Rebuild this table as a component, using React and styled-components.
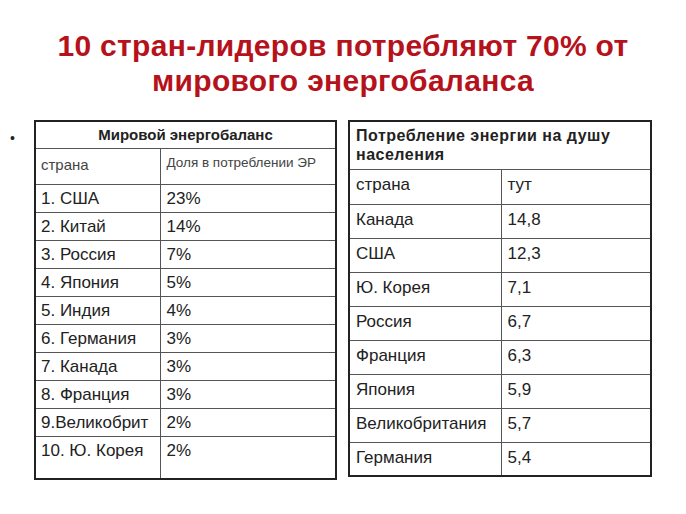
import React from "react";
import styled, { createGlobalStyle } from "styled-components";

const GlobalStyle = createGlobalStyle`
  html, body {
    margin: 0;
    padding: 0;
    background: #ffffff;
  }
  body {
    font-family: "Liberation Sans", Arial, sans-serif;
    color: #222;
  }
`;

const Page = styled.div`
  width: 686px;
  height: 514px;
  overflow: hidden;
  background: #fff;
`;

const Title = styled.h1`
  margin: 0;
  padding-top: 28px;
  text-align: center;
  font-size: 30px;
  line-height: 35px;
  letter-spacing: 0.3px;
  font-weight: bold;
  color: #b5121b;
`;

const Content = styled.div`
  display: flex;
  align-items: flex-start;
  margin-top: 22px;
  padding-left: 10px;
`;

const Bullet = styled.span`
  width: 24px;
  flex: none;
  font-size: 14px;
  line-height: 14px;
  padding-top: 11px;
  color: #222;
`;

const Table = styled.table`
  border-collapse: collapse;
  width: ${(p) => p.$width}px;
  border: 2px solid #222;
  margin-right: ${(p) => p.$gap || 0}px;
  table-layout: fixed;
`;

const Cell = styled.td`
  border: 1px solid #555;
  padding: ${(p) => p.$pad || "4px 5px 0"};
  vertical-align: top;
  text-align: left;
  font-size: ${(p) => p.$size || 17}px;
  line-height: 20px;
  color: ${(p) => p.$color || "#222"};
  height: ${(p) => p.$h}px;
  box-sizing: border-box;
  white-space: nowrap;
  overflow: hidden;
`;

const HeadCell = styled.td`
  border: 1px solid #555;
  padding: ${(p) => p.$pad};
  vertical-align: top;
  text-align: ${(p) => p.$align || "left"};
  font-size: ${(p) => p.$size}px;
  line-height: ${(p) => p.$lh}px;
  letter-spacing: ${(p) => p.$ls || 0}px;
  font-weight: bold;
  color: #222;
  height: ${(p) => p.$h}px;
  box-sizing: border-box;
`;

const world = [
  ["1. США", "23%"],
  ["2. Китай", "14%"],
  ["3. Россия", "7%"],
  ["4. Япония", "5%"],
  ["5. Индия", "4%"],
  ["6. Германия", "3%"],
  ["7. Канада", "3%"],
  ["8. Франция", "3%"],
  ["9.Великобрит", "2%"],
  ["10. Ю. Корея", "2%"],
];

const perCapita = [
  ["Канада", "14,8"],
  ["США", "12,3"],
  ["Ю. Корея", "7,1"],
  ["Россия", "6,7"],
  ["Франция", "6,3"],
  ["Япония", "5,9"],
  ["Великобритания", "5,7"],
  ["Германия", "5,4"],
];

export default function App() {
  return (
    <Page>
      <GlobalStyle />
      <Title>
        10 стран-лидеров потребляют 70% от
        <br />
        мирового энергобаланса
      </Title>
      <Content>
        <Bullet>•</Bullet>
        <Table $width={303} $gap={11}>
          <colgroup>
            <col style={{ width: 125 }} />
            <col />
          </colgroup>
          <tbody>
            <tr>
              <HeadCell colSpan={2} $align="center" $size={15} $lh={17} $h={27} $pad="4px 0 0">
                Мировой энергобаланс
              </HeadCell>
            </tr>
            <tr>
              <Cell $h={36} $size={15} $color="#444" $pad="6px 5px 0">страна</Cell>
              <Cell $h={36} $size={13.5} $color="#444" $pad="4px 6px 0">Доля в потреблении ЭР</Cell>
            </tr>
            {world.map(([c, v], i) => (
              <tr key={c}>
                <Cell $h={i === world.length - 1 ? 43 : 28}>{c}</Cell>
                <Cell $h={i === world.length - 1 ? 43 : 28} $pad="4px 6px 0">{v}</Cell>
              </tr>
            ))}
          </tbody>
        </Table>
        <Table $width={304}>
          <colgroup>
            <col style={{ width: 152 }} />
            <col />
          </colgroup>
          <tbody>
            <tr>
              <HeadCell colSpan={2} $size={16} $lh={19} $ls={0.5} $h={48} $pad="4px 6px 0">
                Потребление энергии на душу населения
              </HeadCell>
            </tr>
            <tr>
              <Cell $h={35} $pad="5px 6px 0">страна</Cell>
              <Cell $h={35} $pad="5px 6px 0">тут</Cell>
            </tr>
            {perCapita.map(([c, v]) => (
              <tr key={c}>
                <Cell $h={34} $pad="5px 6px 0">{c}</Cell>
                <Cell $h={34} $pad="5px 6px 0">{v}</Cell>
              </tr>
            ))}
          </tbody>
        </Table>
      </Content>
    </Page>
  );
}
